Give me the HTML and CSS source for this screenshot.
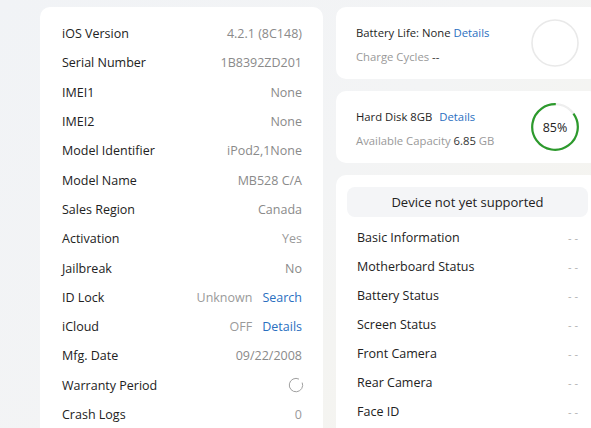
FILE: index.html
```html
<!DOCTYPE html>
<html lang="en">
<head>
<meta charset="utf-8">
<title>Device Info</title>
<link rel="stylesheet" href="styles.css">
</head>
<body>
<div class="page">
  <section class="card info-card">
    <div class="row"><span class="label">iOS Version</span><span class="value">4.2.1 (8C148)</span></div>
    <div class="row"><span class="label">Serial Number</span><span class="value">1B8392ZD201</span></div>
    <div class="row"><span class="label">IMEI1</span><span class="value">None</span></div>
    <div class="row"><span class="label">IMEI2</span><span class="value">None</span></div>
    <div class="row"><span class="label">Model Identifier</span><span class="value">iPod2,1None</span></div>
    <div class="row"><span class="label">Model Name</span><span class="value">MB528 C/A</span></div>
    <div class="row"><span class="label">Sales Region</span><span class="value">Canada</span></div>
    <div class="row"><span class="label">Activation</span><span class="value light">Yes</span></div>
    <div class="row"><span class="label">Jailbreak</span><span class="value">No</span></div>
    <div class="row"><span class="label">ID Lock</span><span class="value light">Unknown<a class="link">Search</a></span></div>
    <div class="row"><span class="label">iCloud</span><span class="value light">OFF<a class="link">Details</a></span></div>
    <div class="row"><span class="label">Mfg. Date</span><span class="value">09/22/2008</span></div>
    <div class="row"><span class="label">Warranty Period</span>
      <span class="value"><svg class="spinner" width="16" height="16" viewBox="0 0 16 16"><path d="M11 2.1 A6.7 6.7 0 1 0 14.2 5.6" fill="none" stroke="#a0a0a0" stroke-width="1"/></svg></span>
    </div>
    <div class="row"><span class="label">Crash Logs</span><span class="value light">0</span></div>
  </section>

  <div class="side">
    <section class="card stat-card">
      <div class="stat-text">
        <div class="stat-title">Battery Life: None <a class="link">Details</a></div>
        <div class="stat-sub">Charge Cycles <b>--</b></div>
      </div>
      <svg class="ring" width="50" height="50" viewBox="0 0 50 50">
        <circle cx="25" cy="25" r="23" fill="none" stroke="#e9e9e9" stroke-width="1.6"/>
      </svg>
    </section>

    <section class="card stat-card">
      <div class="stat-text">
        <div class="stat-title">Hard Disk 8GB <a class="link gap">Details</a></div>
        <div class="stat-sub">Available Capacity <b>6.85</b> GB</div>
      </div>
      <div class="ring-wrap">
        <svg class="ring" width="50" height="50" viewBox="0 0 50 50">
          <circle cx="25" cy="25" r="22.8" fill="none" stroke="#eeeeee" stroke-width="2.2"/>
          <circle cx="25" cy="25" r="22.8" fill="none" stroke="#2c9a2c" stroke-width="2.2"
                  stroke-dasharray="121.8 143.3" transform="rotate(-36 25 25)"/>
        </svg>
        <span class="ring-label">85%</span>
      </div>
    </section>

    <section class="card check-card">
      <div class="notice">Device not yet supported</div>
      <div class="check-row"><span>Basic Information</span><span class="dash">- -</span></div>
      <div class="check-row"><span>Motherboard Status</span><span class="dash">- -</span></div>
      <div class="check-row"><span>Battery Status</span><span class="dash">- -</span></div>
      <div class="check-row"><span>Screen Status</span><span class="dash">- -</span></div>
      <div class="check-row"><span>Front Camera</span><span class="dash">- -</span></div>
      <div class="check-row"><span>Rear Camera</span><span class="dash">- -</span></div>
      <div class="check-row"><span>Face ID</span><span class="dash">- -</span></div>
    </section>
  </div>
</div>
</body>
</html>
```

FILE: styles.css
```css
html, body {
  margin: 0;
  height: 100%;
  overflow: hidden;
}

body {
  font-family: "Open Sans", "Noto Sans", sans-serif;
  font-size: 12px;
  color: #222;
  background: linear-gradient(135deg, #f1f3f6 0%, #f3f4f5 50%, #f6f4ec 100%);
}

.page {
  display: grid;
  grid-template-columns: 283px 263px;
  column-gap: 13px;
  padding: 7px 0 0 40px;
  width: 700px;
}

.card {
  background: #fff;
  border-radius: 10px;
}

.info-card {
  padding: 12px 21px 40px 22px;
}

.row {
  height: 29.3px;
  display: flex;
  align-items: center;
  justify-content: space-between;
  font-size: 12.5px;
}

.label {
  color: #222;
}

.value {
  color: #8a8a8a;
  display: flex;
  align-items: center;
}

.value.light {
  color: #9a9a9a;
}

.link {
  color: #2a6fbf;
  margin-left: 10px;
}

.spinner {
  margin-right: -2px;
}

.side {
  display: flex;
  flex-direction: column;
  gap: 12px;
}

.stat-card {
  height: 72px;
  display: flex;
  align-items: center;
  justify-content: space-between;
  padding: 0 19px 0 20px;
  box-sizing: border-box;
}

.stat-text {
  display: flex;
  flex-direction: column;
  gap: 9px;
  padding-top: 3px;
  font-size: 11.3px;
}

.stat-title {
  color: #1f1f1f;
}

.stat-title .link {
  margin-left: 0;
}

.stat-title .link.gap {
  margin-left: 4px;
}

.stat-sub {
  color: #999;
}

.stat-sub b {
  font-weight: normal;
  color: #333;
}

.ring-wrap {
  position: relative;
  width: 50px;
  height: 50px;
}

.ring {
  display: block;
}

.ring-label {
  position: absolute;
  inset: 0;
  display: flex;
  align-items: center;
  justify-content: center;
  font-size: 12.5px;
  color: #222;
}

.check-card {
  padding: 12px 11px 40px;
}

.notice {
  height: 30px;
  border-radius: 8px;
  background: #f4f5f7;
  display: flex;
  align-items: center;
  justify-content: center;
  font-size: 13px;
  color: #222;
  margin-bottom: 6px;
}

.check-row {
  height: 29px;
  display: flex;
  align-items: center;
  justify-content: space-between;
  padding: 0 10px;
  font-size: 12.5px;
  color: #222;
}

.dash {
  color: #b0b0b0;
  font-size: 11px;
}
```
